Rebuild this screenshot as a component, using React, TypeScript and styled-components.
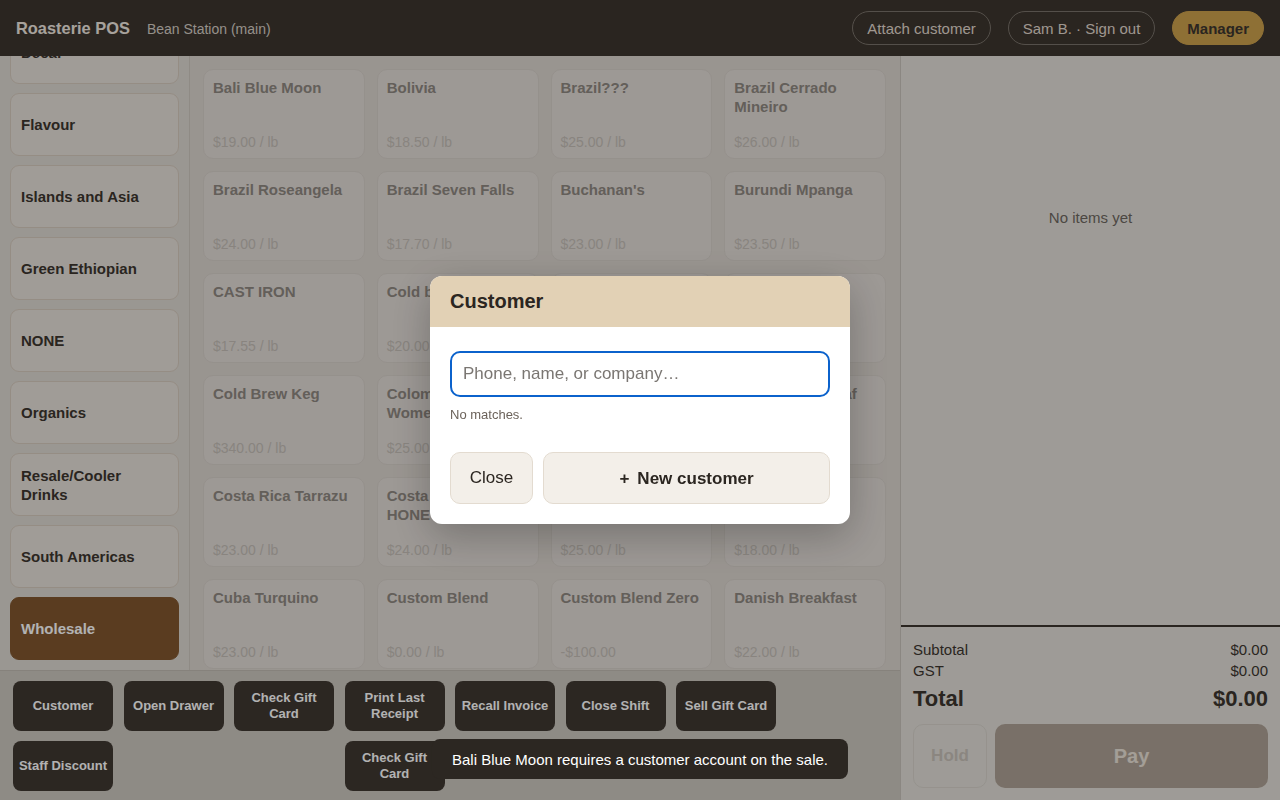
import React, { useLayoutEffect, useRef } from 'react';
import styled, { createGlobalStyle } from 'styled-components';

const GlobalStyle = createGlobalStyle`
  html, body, #root {
    height: 100%;
  }
  body {
    margin: 0;
    font-family: "Liberation Sans", Arial, Helvetica, sans-serif;
    color: #3d362f;
    overflow: hidden;
  }
  * {
    box-sizing: border-box;
  }
`;

const categories = [
  'Blends',
  'Decaf',
  'Flavour',
  'Islands and Asia',
  'Green Ethiopian',
  'NONE',
  'Organics',
  'Resale/Cooler Drinks',
  'South Americas',
  'Wholesale',
];

const products = [
  { name: 'Bali Blue Moon', price: '$19.00 / lb' },
  { name: 'Bolivia', price: '$18.50 / lb' },
  { name: 'Brazil???', price: '$25.00 / lb' },
  { name: 'Brazil Cerrado Mineiro', price: '$26.00 / lb' },
  { name: 'Brazil Roseangela', price: '$24.00 / lb' },
  { name: 'Brazil Seven Falls', price: '$17.70 / lb' },
  { name: "Buchanan's", price: '$23.00 / lb' },
  { name: 'Burundi Mpanga', price: '$23.50 / lb' },
  { name: 'CAST IRON', price: '$17.55 / lb' },
  { name: 'Cold brew blend', price: '$20.00 / lb' },
  { name: 'Colombia Decaf', price: '$21.00 / lb' },
  { name: 'Colombia Huila', price: '$22.50 / lb' },
  { name: 'Cold Brew Keg', price: '$340.00 / lb' },
  { name: 'Colombia Huila Women Producers', price: '$25.00 / lb' },
  { name: 'Congo Kivu', price: '$24.50 / lb' },
  { name: 'Costa Rica Decaf', price: '$23.00 / lb' },
  { name: 'Costa Rica Tarrazu', price: '$23.00 / lb' },
  { name: 'Costa Rica Tarrazu HONEY', price: '$24.00 / lb' },
  { name: 'Costa Rica Tres Rios', price: '$25.00 / lb' },
  { name: 'Crema Blend', price: '$18.00 / lb' },
  { name: 'Cuba Turquino', price: '$23.00 / lb' },
  { name: 'Custom Blend', price: '$0.00 / lb' },
  { name: 'Custom Blend Zero', price: '-$100.00' },
  { name: 'Danish Breakfast', price: '$22.00 / lb' },
];

// quick-key layout, col/row as configured by the store
const quickKeys = [
  { label: 'Customer', col: 1, row: 1 },
  { label: 'Open Drawer', col: 2, row: 1 },
  { label: 'Check Gift Card', col: 3, row: 1 },
  { label: 'Print Last Receipt', col: 4, row: 1 },
  { label: 'Recall Invoice', col: 5, row: 1 },
  { label: 'Close Shift', col: 6, row: 1 },
  { label: 'Sell Gift Card', col: 7, row: 1 },
  { label: 'Staff Discount', col: 1, row: 2 },
  { label: 'Check Gift Card', col: 4, row: 2 },
];

const Shell = styled.div`
  height: 100vh;
  display: grid;
  grid-template-rows: 56px 1fr;
`;

const TopBar = styled.header`
  display: flex;
  align-items: center;
  justify-content: space-between;
  padding: 0 16px;
  background-color: #3d362f;
`;

const Brand = styled.div`
  display: flex;
  align-items: baseline;
  gap: 17px;
`;

const BrandName = styled.span`
  font-size: 16.4px;
  font-weight: 700;
  color: #f0e9e0;
`;

const StoreName = styled.span`
  font-size: 14px;
  color: #d6cfc6;
`;

const TopActions = styled.div`
  display: flex;
  align-items: center;
  gap: 17px;
`;

const Pill = styled.button<{ $accent?: boolean }>`
  height: 34px;
  padding: 0 14px;
  border-radius: 17px;
  font-family: inherit;
  font-size: 15px;
  font-weight: ${(p) => (p.$accent ? 700 : 400)};
  color: ${(p) => (p.$accent ? '#3d362f' : '#e2d9ce')};
  background-color: ${(p) => (p.$accent ? '#cca14c' : 'transparent')};
  border: 1px solid ${(p) => (p.$accent ? '#cca14c' : '#79726a')};
`;

const Main = styled.div`
  display: grid;
  grid-template-columns: 1fr 380px;
  min-height: 0;
`;

const LeftPane = styled.div`
  display: grid;
  grid-template-rows: 1fr 130px;
  min-height: 0;
`;

const Browser = styled.div`
  display: grid;
  grid-template-columns: 190px 1fr;
  min-height: 0;
`;

const Sidebar = styled.nav`
  display: flex;
  flex-direction: column;
  gap: 9px;
  padding: 10px;
  overflow-y: auto;
  scrollbar-width: none;
  background-color: #ddd9d2;
  border-right: 1px solid #cdc7bf;
  &::-webkit-scrollbar {
    display: none;
  }
`;

const CategoryButton = styled.button<{ $active?: boolean }>`
  flex: 0 0 63px;
  display: flex;
  align-items: center;
  padding: 0 10px;
  text-align: left;
  font-family: inherit;
  font-size: 15px;
  font-weight: 700;
  line-height: 19px;
  border-radius: 9px;
  color: ${(p) => (p.$active ? '#ffffff' : '#3d362f')};
  background-color: ${(p) => (p.$active ? '#81562e' : '#e5e0d9')};
  border: 1px solid ${(p) => (p.$active ? '#81562e' : '#d6cabd')};
`;

const ProductGrid = styled.div`
  display: grid;
  grid-template-columns: repeat(4, 1fr);
  grid-auto-rows: 90px;
  gap: 12px;
  padding: 13px 14px 13px 13px;
  overflow: hidden;
  background-color: #dcd6cf;
`;

const ProductCard = styled.button`
  display: flex;
  flex-direction: column;
  justify-content: space-between;
  align-items: flex-start;
  padding: 8px 9px 7px;
  text-align: left;
  font-family: inherit;
  border-radius: 10px;
  background-color: #e1dbd6;
  border: 1px solid #d6d0c9;
`;

const ProductName = styled.span`
  font-size: 15px;
  font-weight: 700;
  line-height: 19px;
  color: #8f8881;
`;

const ProductPrice = styled.span`
  font-size: 14px;
  line-height: 17px;
  color: #c4beb7;
`;

const QuickBar = styled.div`
  display: grid;
  grid-template-columns: repeat(7, 100px);
  grid-auto-rows: 50px;
  column-gap: 10.5px;
  row-gap: 10px;
  align-content: start;
  padding: 10px 13px;
  background-color: #ccc7bf;
  border-top: 1px solid #c0bab2;
`;

const QuickKey = styled.button<{ $col: number; $row: number }>`
  grid-column: ${(p) => p.$col};
  grid-row: ${(p) => p.$row};
  padding: 0 5px;
  font-family: inherit;
  font-size: 13px;
  font-weight: 700;
  line-height: 16px;
  color: #ffffff;
  background-color: #3f3831;
  border: none;
  border-radius: 8px;
`;

const CartPanel = styled.aside`
  display: flex;
  flex-direction: column;
  min-height: 0;
  background-color: #e2dfd9;
  border-left: 1px solid #c8c2bb;
`;

const CartItems = styled.div`
  flex: 1;
  padding-top: 153px;
  text-align: center;
  font-size: 15px;
  color: #6e6760;
`;

const Totals = styled.div`
  padding: 12px 12px 12px 12px;
  border-top: 2px solid #3d362f;
`;

const TotalRow = styled.div<{ $big?: boolean }>`
  display: flex;
  justify-content: space-between;
  font-size: ${(p) => (p.$big ? '22px' : '15px')};
  font-weight: ${(p) => (p.$big ? 700 : 400)};
  line-height: ${(p) => (p.$big ? '28px' : '21px')};
  margin-top: ${(p) => (p.$big ? '4px' : '0')};
  color: #3d362f;
`;

const CheckoutRow = styled.div`
  display: grid;
  grid-template-columns: 74px 1fr;
  gap: 8px;
  height: 64px;
  margin-top: 11px;
`;

const HoldButton = styled.button`
  font-family: inherit;
  font-size: 17px;
  font-weight: 700;
  color: #c7c1b8;
  background-color: transparent;
  border: 1px solid #d7d2cb;
  border-radius: 10px;
`;

const PayButton = styled.button`
  font-family: inherit;
  font-size: 20px;
  font-weight: 700;
  color: #eae2d8;
  background-color: #aea195;
  border: none;
  border-radius: 10px;
`;

const Overlay = styled.div`
  position: fixed;
  inset: 0;
  z-index: 10;
  display: flex;
  align-items: center;
  justify-content: center;
  background-color: rgba(0, 0, 0, 0.3);
`;

const Dialog = styled.div`
  width: 420px;
  border-radius: 12px;
  overflow: hidden;
  background-color: #ffffff;
  box-shadow: 0 12px 40px rgba(0, 0, 0, 0.25);
`;

const DialogHeader = styled.div`
  height: 51px;
  display: flex;
  align-items: center;
  padding: 0 20px;
  background-color: #e2d1b5;
  font-size: 20px;
  font-weight: 700;
  color: #2b2621;
`;

const DialogBody = styled.div`
  padding: 24px 20px 20px;
`;

const SearchInput = styled.input`
  width: 100%;
  height: 46px;
  padding: 0 11px;
  font-family: inherit;
  font-size: 17px;
  color: #2b2621;
  border: 2px solid #0b62cc;
  border-radius: 10px;
  outline: none;
  &::placeholder {
    color: #7a7672;
  }
`;

const Hint = styled.div`
  margin-top: 10px;
  font-size: 13px;
  line-height: 16px;
  color: #6b625a;
`;

const DialogActions = styled.div`
  display: grid;
  grid-template-columns: 83px 1fr;
  gap: 10px;
  height: 52px;
  margin-top: 29px;
`;

const DialogButton = styled.button<{ $primary?: boolean }>`
  display: flex;
  align-items: center;
  justify-content: center;
  gap: 8px;
  padding-top: ${(p) => (p.$primary ? '2px' : '0')};
  font-family: inherit;
  font-size: 17px;
  font-weight: ${(p) => (p.$primary ? 700 : 400)};
  color: #2b2621;
  background-color: #f3efe9;
  border: 1px solid #e3dbd0;
  border-radius: 10px;
`;

const Toast = styled.div`
  position: fixed;
  left: 50%;
  bottom: 21px;
  transform: translateX(-50%);
  z-index: 20;
  height: 40px;
  display: flex;
  align-items: center;
  padding: 0 20px;
  white-space: nowrap;
  font-size: 15px;
  color: #ffffff;
  background-color: #2c2722;
  border-radius: 8px;
`;

const App = () => {
  const sidebarRef = useRef<HTMLElement>(null);

  useLayoutEffect(() => {
    if (sidebarRef.current) {
      sidebarRef.current.scrollTop = sidebarRef.current.scrollHeight;
    }
  }, []);

  return (
    <>
      <GlobalStyle />
      <Shell>
        <TopBar>
          <Brand>
            <BrandName>Roasterie POS</BrandName>
            <StoreName>Bean Station (main)</StoreName>
          </Brand>
          <TopActions>
            <Pill>Attach customer</Pill>
            <Pill>Sam B. · Sign out</Pill>
            <Pill $accent>Manager</Pill>
          </TopActions>
        </TopBar>
        <Main>
          <LeftPane>
            <Browser>
              <Sidebar ref={sidebarRef}>
                {categories.map((c) => (
                  <CategoryButton key={c} $active={c === 'Wholesale'}>
                    {c}
                  </CategoryButton>
                ))}
              </Sidebar>
              <ProductGrid>
                {products.map((p) => (
                  <ProductCard key={p.name}>
                    <ProductName>{p.name}</ProductName>
                    <ProductPrice>{p.price}</ProductPrice>
                  </ProductCard>
                ))}
              </ProductGrid>
            </Browser>
            <QuickBar>
              {quickKeys.map((k) => (
                <QuickKey key={k.label + k.row} $col={k.col} $row={k.row}>
                  {k.label}
                </QuickKey>
              ))}
            </QuickBar>
          </LeftPane>
          <CartPanel>
            <CartItems>No items yet</CartItems>
            <Totals>
              <TotalRow>
                <span>Subtotal</span>
                <span>$0.00</span>
              </TotalRow>
              <TotalRow>
                <span>GST</span>
                <span>$0.00</span>
              </TotalRow>
              <TotalRow $big>
                <span>Total</span>
                <span>$0.00</span>
              </TotalRow>
              <CheckoutRow>
                <HoldButton>Hold</HoldButton>
                <PayButton>Pay</PayButton>
              </CheckoutRow>
            </Totals>
          </CartPanel>
        </Main>
      </Shell>
      <Overlay>
        <Dialog>
          <DialogHeader>Customer</DialogHeader>
          <DialogBody>
            <SearchInput placeholder="Phone, name, or company…" />
            <Hint>No matches.</Hint>
            <DialogActions>
              <DialogButton>Close</DialogButton>
              <DialogButton $primary>
                <span>+</span>
                <span>New customer</span>
              </DialogButton>
            </DialogActions>
          </DialogBody>
        </Dialog>
      </Overlay>
      <Toast>Bali Blue Moon requires a customer account on the sale.</Toast>
    </>
  );
};

export default App;
